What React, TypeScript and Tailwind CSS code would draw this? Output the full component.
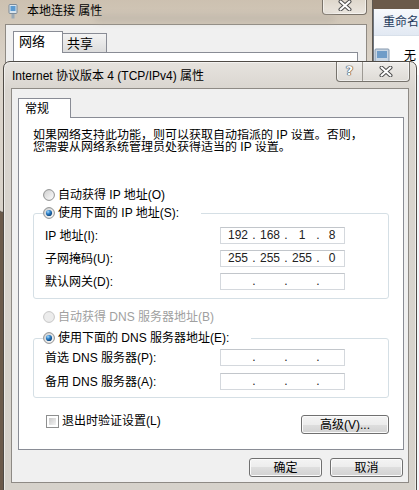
import { Fragment, type ReactNode } from 'react'

const uiFont = "font-['Liberation_Sans','Noto_Sans_CJK_SC',sans-serif]"

function RadioMark({ checked = false, disabled = false }: { checked?: boolean; disabled?: boolean }) {
  return (
    <svg width="12" height="12" viewBox="0 0 12 12" className="shrink-0">
      <defs>
        <linearGradient id="rb-bg" x1="0" y1="0" x2="1" y2="1">
          <stop offset="0" stopColor="#cdcdcd" />
          <stop offset="1" stopColor="#ffffff" />
        </linearGradient>
        <radialGradient id="rb-dot" cx="0.35" cy="0.3" r="0.8">
          <stop offset="0" stopColor="#a6dcff" />
          <stop offset="0.45" stopColor="#2a7cc4" />
          <stop offset="1" stopColor="#0b3c6e" />
        </radialGradient>
      </defs>
      <circle cx="6" cy="6" r="5.4" fill={disabled ? '#ececec' : 'url(#rb-bg)'} stroke={disabled ? '#c6c6c6' : '#8e8f8f'} strokeWidth="1" />
      {checked && <circle cx="6" cy="6" r="3.1" fill="url(#rb-dot)" />}
    </svg>
  )
}

function Radio({ label, checked, disabled }: { label: string; checked?: boolean; disabled?: boolean }) {
  return (
    <div className={`flex h-[14px] items-center gap-[3px] ${disabled ? 'text-[#a0a0a0]' : 'text-black'}`}>
      <RadioMark checked={checked} disabled={disabled} />
      <span className="leading-[14px]">{label}</span>
    </div>
  )
}

function IpField({ parts = ['', '', '', ''] }: { parts?: string[] }) {
  return (
    <div className="flex h-[17px] w-[125px] items-center border border-[#d4d8dd] border-t-[#c2c6cb] bg-white pl-[3px] font-['Liberation_Sans',sans-serif] text-[12px] leading-[15px] text-[#222]">
      {parts.map((v, i) => (
        <Fragment key={i}>
          {i > 0 && <span className="w-[4px] text-center">.</span>}
          <span className={i < 3 ? 'w-[28px] text-center' : 'flex-1 text-center'}>{v}</span>
        </Fragment>
      ))}
    </div>
  )
}

function Row({ label, parts }: { label: string; parts?: string[] }) {
  return (
    <div className="flex items-center">
      <span className="w-[175px] leading-[14px]">{label}</span>
      <IpField parts={parts} />
    </div>
  )
}

function WinButton({ children, className = '' }: { children: ReactNode; className?: string }) {
  return (
    <button className={`flex h-[19px] items-center justify-center rounded-[3px] border border-[#707070] bg-[linear-gradient(#f4f4f4,#ececec_50%,#dedede_50%,#d2d2d2)] text-[12px] leading-[14px] text-black shadow-[inset_0_0_0_1px_#fbfbfb] ${className}`}>
      {children}
    </button>
  )
}

function CloseGlyph() {
  return (
    <svg width="14" height="11" viewBox="0 0 14 11">
      <path d="M2.5 1.5 L11.5 9.5 M11.5 1.5 L2.5 9.5" stroke="#4d4d4d" strokeWidth="4" strokeLinecap="round" />
      <path d="M2.5 1.5 L11.5 9.5 M11.5 1.5 L2.5 9.5" stroke="#ffffff" strokeWidth="2" strokeLinecap="round" />
    </svg>
  )
}

function BackWindow() {
  return (
    <div className="absolute left-[-3px] top-[-7px] flex h-[220px] w-[376px] flex-col rounded-[7px] border border-[#5e5850] bg-[linear-gradient(180deg,#cbbfae,#dcd5cb_35%,#d8d2c9)] pl-[7px] pr-[5px]">
      <div className="relative flex h-[30px] shrink-0 items-start">
        <div className="pointer-events-none absolute left-[90px] top-[21px] h-[7px] w-[240px] rounded-full bg-[#b9b1a5] opacity-60 blur-[3px]" />
        <svg width="10" height="15" viewBox="0 0 10 15" className="ml-[3px] mt-[10px]">
          <rect x="1" y="0.5" width="8" height="9" rx="1" fill="#d8e4ee" stroke="#7d8b98" />
          <rect x="2.5" y="2" width="5" height="5" fill="#5b9ad0" />
          <rect x="3.5" y="10" width="3" height="4.5" fill="#9aa9b6" />
        </svg>
        <span className="ml-[9px] mt-[9px] text-[12px] leading-[16px] text-black">本地连接 属性</span>
        <div className="ml-auto flex h-[21px] w-[45px] items-end justify-center rounded-b-[4px] border border-t-0 border-[#7a736a] bg-[linear-gradient(#d9d1c4,#ebe6df)] pb-[3px] shadow-[inset_0_0_0_1px_rgba(255,255,255,0.5)]">
          <CloseGlyph />
        </div>
      </div>
      <div className="flex flex-1 flex-col border border-[#8f8a83] bg-[#f0f0f0] pl-[7px] pr-[8px] pt-[6px]">
        <div className="flex items-end">
          <div className="relative z-10 -mb-px h-[22px] w-[50px] border border-b-0 border-[#898c95] bg-white pl-[5px] pt-[2px] text-[13px] leading-[16px]">网络</div>
          <div className="h-[19px] w-[44px] border border-l-0 border-b-0 border-[#898c95] bg-[linear-gradient(#f3f3f3,#dcdcdc)] pl-[4px] pt-[2px] text-[13px] leading-[16px]">共享</div>
        </div>
        <div className="flex-1 border border-[#898c95] bg-white" />
      </div>
    </div>
  )
}

function ExplorerWindow() {
  return (
    <div className="absolute left-[373px] top-[9px] flex h-[481px] w-[60px] flex-col border-l border-[#6f7680] bg-[#f3f6fa]">
      <div className="flex h-[26px] items-center bg-[linear-gradient(#f7f9fc,#e2e9f3)] pl-[9px] text-[12px] text-[#1e395b]">重命名</div>
      <div className="flex h-[40px] items-center gap-[12px] border-t border-[#d8e0ea] bg-white">
        <svg width="18" height="18" viewBox="0 0 18 18">
          <rect x="1" y="2" width="14" height="13" rx="1" fill="#c9d6e4" stroke="#8497ad" />
          <rect x="3" y="4" width="10" height="7" fill="#6f9cc8" />
        </svg>
        <span className="text-[12px]">无</span>
      </div>
    </div>
  )
}

function TcpDialog() {
  return (
    <div className="absolute left-[3px] top-[61px] flex h-[432px] w-[414px] flex-col rounded-t-[7px] border border-[#4f4b46] bg-[linear-gradient(180deg,#e6e3de,#d9d5cf_28px,#d6d2cb)] px-[7px] shadow-[inset_0_0_0_1px_rgba(255,255,255,0.55)]">
      <div className="flex h-[26px] shrink-0 items-start">
        <span className="ml-[1px] mt-[6px] text-[12px] leading-[16px] text-black">Internet 协议版本 4 (TCP/IPv4) 属性</span>
        <div className="-mr-px ml-auto flex h-[20px] rounded-b-[4px] border border-t-0 border-[#77736d] bg-[linear-gradient(#eeece9,#dedbd6)] shadow-[inset_0_0_0_1px_rgba(255,255,255,0.5)]">
          <div className="flex w-[26px] items-center justify-center border-r border-[#9d9993] pb-[2px] font-['DejaVu_Sans',sans-serif] text-[13px] font-bold text-white [text-shadow:0_0_1px_#333,0_0_1px_#333,0_0_1px_#333]">?</div>
          <div className="flex w-[46px] items-center justify-center pb-[1px]">
            <CloseGlyph />
          </div>
        </div>
      </div>

      <div className="flex h-[395px] shrink-0 flex-col border border-[#8e8a85] bg-[#f0f0f0] pl-[6px] pr-[4px] pt-[9px]">
        <div className="relative z-10 h-[20px] w-[53px] border border-b-0 border-[#898c95] bg-white pl-[6px] pt-[2px] leading-[16px]">常规</div>
        <div className="-mt-px flex h-[333px] flex-col border border-[#898c95] bg-white px-[14px] pt-[11px]">
          <div className="flex flex-col">
            <div className="h-[12px] overflow-hidden leading-[12px]">如果网络支持此功能，则可以获取自动指派的 IP 设置。否则，</div>
            <div className="h-[12px] overflow-hidden leading-[12px]">您需要从网络系统管理员处获得适当的 IP 设置。</div>
          </div>

          <div className="mt-[35px] pl-[10px]">
            <Radio label="自动获得 IP 地址(O)" />
          </div>

          <fieldset className="mt-[4px] rounded-[3px] border border-[#d5dfe5] px-[11px] pb-[8px]">
            <legend className="-ml-[2px] pr-[22px]">
              <Radio label="使用下面的 IP 地址(S):" checked />
            </legend>
            <div className="mt-[7px] flex flex-col gap-[6px]">
              <Row label="IP 地址(I):" parts={['192', '168', '1', '8']} />
              <Row label="子网掩码(U):" parts={['255', '255', '255', '0']} />
              <Row label="默认网关(D):" />
            </div>
          </fieldset>

          <div className="mt-[11px] pl-[10px]">
            <Radio label="自动获得 DNS 服务器地址(B)" disabled />
          </div>

          <fieldset className="mt-[7px] rounded-[3px] border border-[#d5dfe5] px-[11px] pb-[7px]">
            <legend className="-ml-[2px] pr-[22px]">
              <Radio label="使用下面的 DNS 服务器地址(E):" checked />
            </legend>
            <div className="mt-[4px] flex flex-col gap-[7px]">
              <Row label="首选 DNS 服务器(P):" />
              <Row label="备用 DNS 服务器(A):" />
            </div>
          </fieldset>

          <div className="mt-[17px] flex items-start justify-between">
            <div className="flex items-center gap-[3px] pl-[13px]">
              <span className="flex h-[13px] w-[13px] border border-[#8e8f8f] bg-white p-[2px]">
                <span className="block h-full w-full bg-linear-to-br from-[#c9c9c9] to-[#f4f4f4]" />
              </span>
              <span className="leading-[13px]">退出时验证设置(L)</span>
            </div>
            <WinButton className="w-[88px]">高级(V)...</WinButton>
          </div>
        </div>

        <div className="mt-[8px] flex justify-end gap-[8px] pr-[1px]">
          <WinButton className="w-[73px]">确定</WinButton>
          <WinButton className="w-[73px]">取消</WinButton>
        </div>
      </div>
    </div>
  )
}

export default function App() {
  return (
    <div className={`relative h-[490px] w-[419px] overflow-hidden bg-[#6b5a4a] text-[12px] text-black ${uiFont}`}>
      <ExplorerWindow />
      <BackWindow />
      <TcpDialog />
    </div>
  )
}
